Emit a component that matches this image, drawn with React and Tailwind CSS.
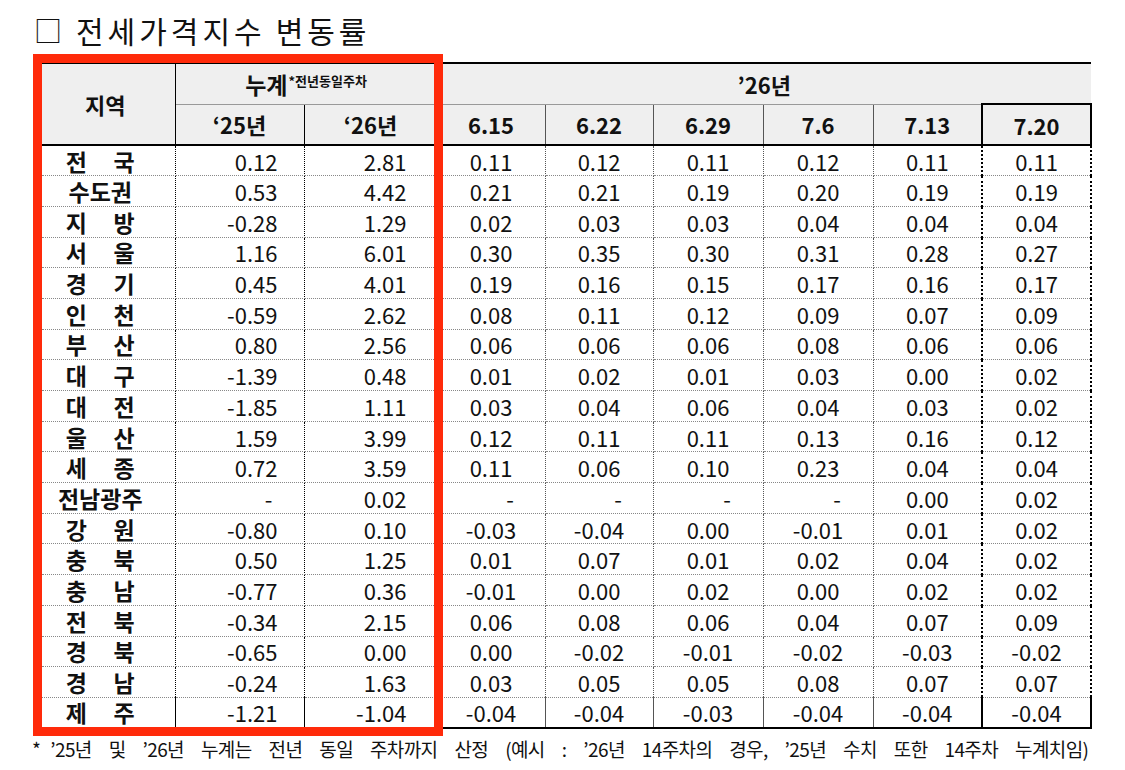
import React from 'react';

// 주간 컬럼 헤더
const WEEKS = ['6.15', '6.22', '6.29', '7.6', '7.13', '7.20'];

const ROWS = [
  ['전국', '0.12', '2.81', '0.11', '0.12', '0.11', '0.12', '0.11', '0.11'],
  ['수도권', '0.53', '4.42', '0.21', '0.21', '0.19', '0.20', '0.19', '0.19'],
  ['지방', '-0.28', '1.29', '0.02', '0.03', '0.03', '0.04', '0.04', '0.04'],
  ['서울', '1.16', '6.01', '0.30', '0.35', '0.30', '0.31', '0.28', '0.27'],
  ['경기', '0.45', '4.01', '0.19', '0.16', '0.15', '0.17', '0.16', '0.17'],
  ['인천', '-0.59', '2.62', '0.08', '0.11', '0.12', '0.09', '0.07', '0.09'],
  ['부산', '0.80', '2.56', '0.06', '0.06', '0.06', '0.08', '0.06', '0.06'],
  ['대구', '-1.39', '0.48', '0.01', '0.02', '0.01', '0.03', '0.00', '0.02'],
  ['대전', '-1.85', '1.11', '0.03', '0.04', '0.06', '0.04', '0.03', '0.02'],
  ['울산', '1.59', '3.99', '0.12', '0.11', '0.11', '0.13', '0.16', '0.12'],
  ['세종', '0.72', '3.59', '0.11', '0.06', '0.10', '0.23', '0.04', '0.04'],
  ['전남광주', '-', '0.02', '-', '-', '-', '-', '0.00', '0.02'],
  ['강원', '-0.80', '0.10', '-0.03', '-0.04', '0.00', '-0.01', '0.01', '0.02'],
  ['충북', '0.50', '1.25', '0.01', '0.07', '0.01', '0.02', '0.04', '0.02'],
  ['충남', '-0.77', '0.36', '-0.01', '0.00', '0.02', '0.00', '0.02', '0.02'],
  ['전북', '-0.34', '2.15', '0.06', '0.08', '0.06', '0.04', '0.07', '0.09'],
  ['경북', '-0.65', '0.00', '0.00', '-0.02', '-0.01', '-0.02', '-0.03', '-0.02'],
  ['경남', '-0.24', '1.63', '0.03', '0.05', '0.05', '0.08', '0.07', '0.07'],
  ['제주', '-1.21', '-1.04', '-0.04', '-0.04', '-0.03', '-0.04', '-0.04', '-0.04'],
];

function RegionName({ name }) {
  // 두 글자 지역명은 세 글자 폭에 맞춰 양끝 정렬
  if (name.length === 2) {
    return (
      <span className="mx-auto flex w-[69px] justify-between">
        <span>{name[0]}</span>
        <span>{name[1]}</span>
      </span>
    );
  }
  return <span>{name}</span>;
}

function WeekCell({ value, last, bottom }) {
  const border = last
    ? 'border-l-2 border-r-2 border-l-black border-r-black'
    : 'border-r border-r-[#555]';
  return (
    <td
      className={`${border} ${bottom ? 'border-b-2 border-b-black' : 'border-b border-dotted border-b-[#888]'} text-center`}
    >
      {value === '-' ? <span className="pl-[38px]">-</span> : value}
    </td>
  );
}

export default function App() {
  return (
    <div className="relative h-[770px] w-[1125px] overflow-hidden bg-white font-['Noto_Sans_CJK_KR','Noto_Sans',sans-serif] text-[#111]">
      {/* 제목 */}
      <div className="flex h-[62px] items-start pl-[34px] pt-[10px] text-[30px] leading-[40px]">
        <span className="mr-[14px] text-[28px]">□</span>
        <span className="mr-[10px] tracking-[4px]">전세가격지수</span>
        <span className="tracking-[4px]">변동률</span>
      </div>

      {/* 표 */}
      <table className="ml-[42px] w-[1049px] table-fixed border-collapse text-[22px] leading-none">
        <colgroup>
          <col className="w-[133px]" />
          <col className="w-[129px]" />
          <col className="w-[133px]" />
          <col className="w-[108px]" />
          <col className="w-[108px]" />
          <col className="w-[110px]" />
          <col className="w-[110px]" />
          <col className="w-[109px]" />
          <col className="w-[109px]" />
        </colgroup>
        <thead className="bg-[#efefef] font-bold">
          <tr className="h-[41px] border-t-2 border-t-black">
            <th rowSpan={2} className="border-r border-r-black border-b-2 border-b-black pr-[6px] text-[22px]">
              지역
            </th>
            <th colSpan={2} className="border-r border-r-black border-b border-b-[#999] pt-[2px] align-middle">
              <span className="text-[23px]">누계</span>
              <sup className="relative top-[-8px] ml-[1px] align-baseline text-[13px] font-bold">*전년동일주차</sup>
            </th>
            <th colSpan={6} className="border-b border-b-[#999]">
              ’26년
            </th>
          </tr>
          <tr className="h-[41px] border-b-2 border-b-black">
            <th className="border-r border-r-black">‘25년</th>
            <th className="border-r border-r-black">‘26년</th>
            {WEEKS.map((w, i) =>
              i === WEEKS.length - 1 ? (
                <th key={w} className="border-t-2 border-t-black border-l-2 border-l-black border-r-2 border-r-black">
                  {w}
                </th>
              ) : (
                <th key={w} className="border-r border-r-[#555]">
                  {w}
                </th>
              )
            )}
          </tr>
        </thead>
        <tbody>
          {ROWS.map((row, ri) => {
            const bottom = ri === ROWS.length - 1;
            const rowBorder = bottom ? 'border-b-2 border-b-black' : 'border-b border-dotted border-b-[#888]';
            return (
              <tr key={row[0]} className="h-[30.7px]">
                <td className={`${rowBorder} border-r border-r-black pr-[16px] text-center text-[23px] leading-[24px] font-bold`}>
                  <RegionName name={row[0]} />
                </td>
                <td className={`${rowBorder} border-r border-r-black pr-[26px] text-right`}>
                  {row[1] === '-' ? <span className="pr-[5px]">-</span> : row[1]}
                </td>
                <td className={`${rowBorder} border-r border-r-black pr-[30px] text-right`}>{row[2]}</td>
                {row.slice(3).map((v, ci) => (
                  <WeekCell key={ci} value={v} last={ci === 5} bottom={bottom} />
                ))}
              </tr>
            );
          })}
        </tbody>
      </table>

      {/* 주석 */}
      <p className="mt-[8px] pl-[32px] text-[19px] leading-[24px] tracking-[-0.6px] [word-spacing:13.3px]">
        <span className="mr-[10px]">*</span>’25년 및 ’26년 누계는 전년 동일 주차까지 산정 (예시 : ’26년 14주차의 경우, ’25년 수치 또한 14주차 누계치임)
      </p>

      {/* 빨간 강조 박스 */}
      <div className="pointer-events-none absolute left-[33px] top-[54px] h-[682px] w-[410px] border-[9px] border-[#ff2a0a]" />
    </div>
  );
}
